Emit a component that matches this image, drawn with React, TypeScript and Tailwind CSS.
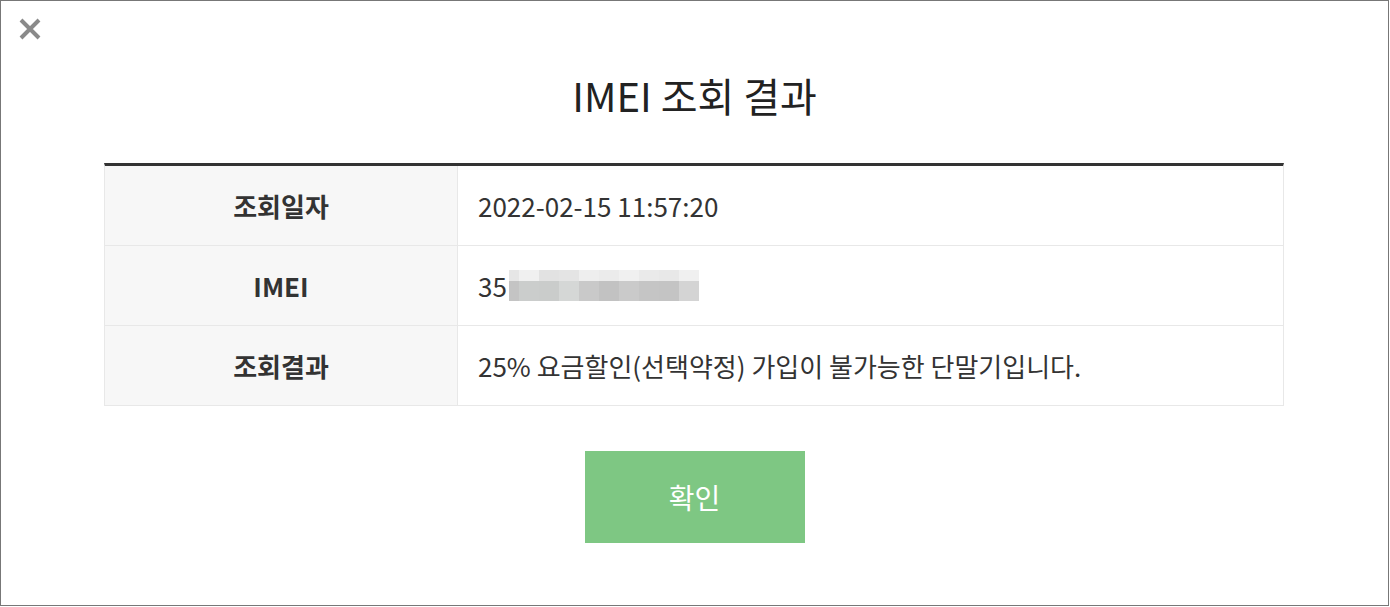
const blurTop = ["#e6e6e6", "#f0f0f0", "#e2e2e2", "#e4e4e4", "#eeeeee", "#ebebeb", "#f0f0f0", "#eaeaea", "#e8e8e8", "#f0f0f0"];
const blurBottom = ["#c4c4c4", "#cbcdcc", "#cacccb", "#d5d7d6", "#c9c9c9", "#c2c2c2", "#cacaca", "#c5c5c5", "#c4c4c4", "#d4d4d4"];

function Blurred() {
  // pixelated (masked) part of the IMEI number
  return (
    <span className="ml-[2px] inline-flex flex-col self-center">
      <span className="flex h-[11px]">
        {blurTop.map((c, i) => (
          <span key={i} className={i === 0 ? "w-[10px]" : "w-[20px]"} style={{ background: c }} />
        ))}
      </span>
      <span className="flex h-[20px]">
        {blurBottom.map((c, i) => (
          <span key={i} className={i === 0 ? "w-[10px]" : "w-[20px]"} style={{ background: c }} />
        ))}
      </span>
    </span>
  );
}

function Row({ label, children, last }: { label: string; children: React.ReactNode; last?: boolean }) {
  return (
    <div className={`flex ${last ? "h-[79px]" : "h-[80px] border-b border-[#e8e8e8]"}`}>
      <div className="flex w-[353px] shrink-0 items-center justify-center border-r border-[#e8e8e8] bg-[#f7f7f7] text-[26px] font-bold text-[#333]">
        {label}
      </div>
      <div className="flex flex-1 items-center pl-5 text-[26px] text-[#333]">{children}</div>
    </div>
  );
}

export default function App() {
  return (
    <div
      className="relative h-[606px] w-[1389px] border border-[#777] bg-white"
      style={{ fontFamily: '"Noto Sans CJK KR", "Noto Sans", sans-serif' }}
    >
      <button className="absolute left-[17px] top-[16px] flex h-[23px] w-[23px] items-center justify-center">
        <svg width="22" height="22" viewBox="0 0 22 22">
          <path d="M2 2 L20 20 M20 2 L2 20" stroke="#8a8a8a" strokeWidth="4" />
        </svg>
      </button>

      <h1 className="pt-[67px] text-center text-[40px] leading-[54px] font-normal text-[#222]">IMEI 조회 결과</h1>

      <div className="ml-[103px] mt-[41px] w-[1180px] border-x border-b border-t-[3px] border-x-[#e8e8e8] border-b-[#e8e8e8] border-t-[#333]">
        <Row label="조회일자">2022-02-15 11:57:20</Row>
        <Row label="IMEI">
          <span>35</span>
          <Blurred />
        </Row>
        <Row label="조회결과" last>
          25% 요금할인(선택약정) 가입이 불가능한 단말기입니다.
        </Row>
      </div>

      <div className="mt-[45px] flex justify-center">
        <button className="h-[92px] w-[220px] bg-[#7ec783] text-[28px] text-white">확인</button>
      </div>
    </div>
  );
}
